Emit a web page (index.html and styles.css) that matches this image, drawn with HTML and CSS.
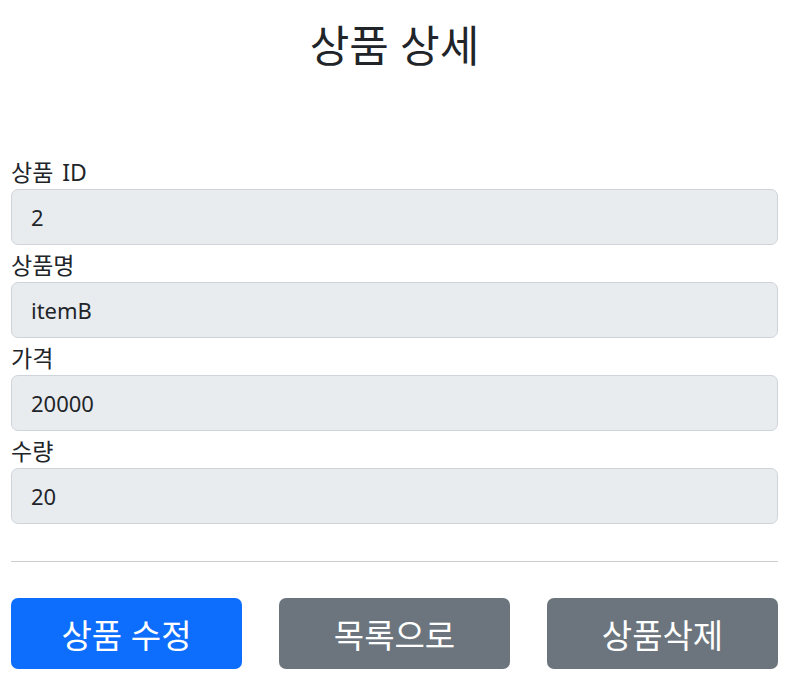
FILE: index.html
```html
<!DOCTYPE html>
<html lang="ko">
<head>
<meta charset="utf-8">
<title>상품 상세</title>
<link rel="stylesheet" href="styles.css">
</head>
<body>
<div class="container">
  <div class="header">
    <h2 class="title">상품 상세</h2>
  </div>
  <form class="form">
    <div class="field">
      <label class="label" for="itemId">상품 ID</label>
      <input class="control" id="itemId" type="text" value="2" readonly>
    </div>
    <div class="field">
      <label class="label" for="itemName">상품명</label>
      <input class="control" id="itemName" type="text" value="itemB" readonly>
    </div>
    <div class="field">
      <label class="label" for="price">가격</label>
      <input class="control" id="price" type="text" value="20000" readonly>
    </div>
    <div class="field">
      <label class="label" for="quantity">수량</label>
      <input class="control" id="quantity" type="text" value="20" readonly>
    </div>
  </form>
  <hr class="divider">
  <div class="actions">
    <button class="btn btn-primary" type="button">상품 수정</button>
    <button class="btn btn-secondary" type="button">목록으로</button>
    <button class="btn btn-secondary" type="button">상품삭제</button>
  </div>
</div>
</body>
</html>
```

FILE: styles.css
```css
* { box-sizing: border-box; }
html, body { margin: 0; padding: 0; background: #fff; }
body {
  font-family: "Noto Sans", "Noto Sans CJK KR", sans-serif;
  color: #212529;
  font-size: 20px;
}
.container {
  padding: 0 16px 0 11px;
}
.header {
  height: 152px;
  padding-top: 16px;
  text-align: center;
}
.title {
  margin: 0;
  font-weight: 400;
  font-size: 43px;
  line-height: 60px;
}
.form { margin: 0; }
.field { display: flex; flex-direction: column; }
.label {
  display: block;
  height: 37px;
  line-height: 40px;
  font-size: 23px;
  word-spacing: 3px;
}
.control {
  display: block;
  width: 100%;
  height: 56px;
  padding: 0 19px;
  font-family: inherit;
  font-size: 22px;
  color: #212529;
  background: #e9ecef;
  border: 1px solid #ced4da;
  border-radius: 7px;
  outline: none;
}
.divider {
  margin: 37px 0 36px;
  border: 0;
  border-top: 1px solid #cdcdcd;
  height: 0;
}
.actions {
  display: grid;
  grid-template-columns: 1fr 1fr 1fr;
  column-gap: 37px;
}
.btn {
  height: 71px;
  border: 0;
  border-radius: 7px;
  color: #fff;
  font-family: inherit;
  font-size: 33px;
  padding: 0;
  cursor: pointer;
}
.btn-primary { background: #0d6efd; }
.btn-secondary { background: #6c757d; }
```
